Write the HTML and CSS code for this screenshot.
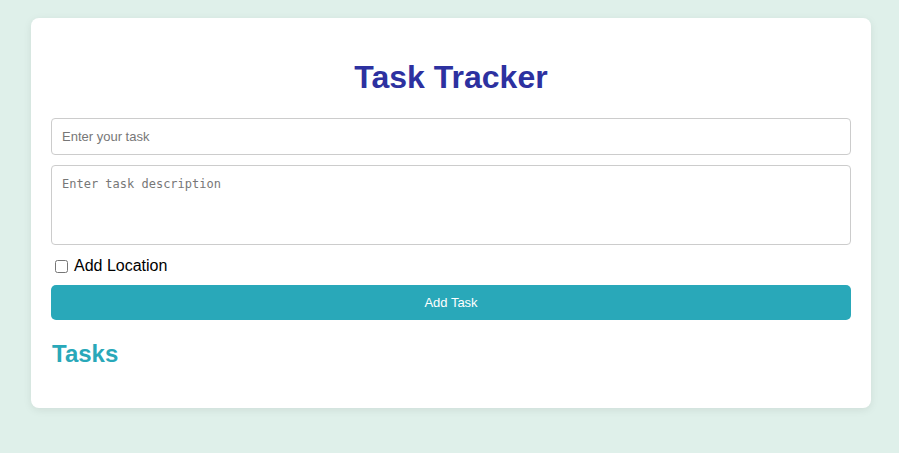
FILE: index.html
```html
<!DOCTYPE html>
<html>
<head>
<meta charset="utf-8">
<link rel="stylesheet" href="styles.css">
</head>
<body>
<div class="container">
  <h1 class="title">Task Tracker</h1>
  <form class="task-form">
    <input class="task-input" type="text" placeholder="Enter your task">
    <textarea class="task-desc" placeholder="Enter task description"></textarea>
    <label class="loc-label"><input class="loc-check" type="checkbox"> Add Location</label>
    <button class="add-btn" type="button">Add Task</button>
  </form>
  <h2 class="tasks-title">Tasks</h2>
  <ul class="task-list"></ul>
</div>
</body>
</html>
```
FILE: styles.css
```css
html, body {
  margin: 0;
  padding: 0;
}
body {
  background: #dff0ea;
  font-family: "Liberation Sans", Arial, sans-serif;
  padding: 18px 0 0 3px;
  height: 453px;
  box-sizing: border-box;
}
.container {
  width: 840px;
  box-sizing: border-box;
  margin: 0 auto;
  background: #fff;
  border-radius: 8px;
  padding: 20px;
  box-shadow: 0 2px 8px rgba(0, 0, 0, 0.08);
}
.title {
  text-align: center;
  color: #2d31a0;
  font-size: 32px;
  margin: 21px 0 22px;
  line-height: 37px;
}
.task-form {
  display: flex;
  flex-direction: column;
}
.task-input, .task-desc {
  width: 100%;
  box-sizing: border-box;
  border: 1px solid #ccc;
  border-radius: 4px;
  padding: 10px;
  font-size: 13px;
  color: #333;
  margin: 0 0 10px;
}
.task-input {
  height: 37px;
  font-family: "Liberation Sans", Arial, sans-serif;
}
.task-input::placeholder {
  color: #777;
}
.task-desc {
  height: 80px;
  resize: none;
  font-family: "DejaVu Sans Mono", monospace;
  font-size: 12px;
  padding: 11px 10px 10px;
}
.task-desc::placeholder {
  color: #777;
}
.loc-label {
  display: flex;
  align-items: center;
  font-size: 16px;
  color: #000;
  height: 22px;
  margin: 0 0 8px 4px;
  gap: 6px;
}
.loc-check {
  margin: 0;
  width: 13px;
  height: 13px;
}
.add-btn {
  height: 35px;
  background: #29a8b9;
  color: #fff;
  border: none;
  border-radius: 5px;
  font-family: "Liberation Sans", Arial, sans-serif;
  font-size: 13px;
}
.tasks-title {
  color: #29a8b9;
  font-size: 24px;
  line-height: 28px;
  margin: 20px 0 20px 1px;
}
.task-list {
  margin: 0;
  padding: 0;
}
```
